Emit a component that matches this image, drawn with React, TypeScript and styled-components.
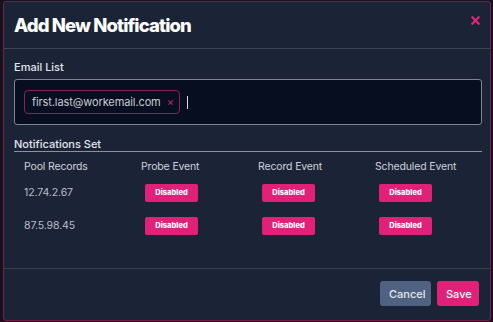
import React from "react";
import styled, { createGlobalStyle } from "styled-components";

const GlobalStyle = createGlobalStyle`
  html, body {
    margin: 0;
    padding: 0;
    background: #12141a;
  }
  body {
    font-family: Inter, "Noto Sans", sans-serif;
  }
`;

const rows = [
  { ip: "12.74.2.67" },
  { ip: "87.5.98.45" },
];

const columns = ["Pool Records", "Probe Event", "Record Event", "Scheduled Event"];

export default function App() {
  return (
    <>
      <GlobalStyle />
      <Backdrop>
        <Modal>
          <Header>
            <Title>Add New Notification</Title>
            <CloseButton aria-label="close">
              <svg width="9" height="9" viewBox="0 0 10 10">
                <path d="M1.5 1.5 L8.5 8.5 M8.5 1.5 L1.5 8.5" stroke="#e3237d" strokeWidth="2.4" strokeLinecap="square" />
              </svg>
            </CloseButton>
          </Header>
          <Body>
            <Label>Email List</Label>
            <EmailBox>
              <Chip>
                first.last@workemail.com
                <ChipRemove>×</ChipRemove>
              </Chip>
              <Caret />
            </EmailBox>
            <SectionTitle>Notifications Set</SectionTitle>
            <Table>
              {columns.map((c) => (
                <HeadCell key={c}>{c}</HeadCell>
              ))}
              {rows.map((r) => (
                <React.Fragment key={r.ip}>
                  <IpCell>{r.ip}</IpCell>
                  <Cell><StatusButton>Disabled</StatusButton></Cell>
                  <Cell><StatusButton>Disabled</StatusButton></Cell>
                  <Cell><StatusButton>Disabled</StatusButton></Cell>
                </React.Fragment>
              ))}
            </Table>
          </Body>
          <Footer>
            <Button $variant="secondary">Cancel</Button>
            <Button $variant="primary">Save</Button>
          </Footer>
        </Modal>
      </Backdrop>
    </>
  );
}

const Backdrop = styled.div`
  width: 493px;
  height: 322px;
  padding: 1px 2px 1px 3px;
  box-sizing: border-box;
`;

const Modal = styled.div`
  width: 488px;
  height: 320px;
  box-sizing: border-box;
  background: #1b2437;
  border: 1px solid #7c1d4f;
  border-radius: 3px;
  display: flex;
  flex-direction: column;
`;

const Header = styled.div`
  height: 47px;
  box-sizing: border-box;
  border-bottom: 1px solid #3d4452;
  display: flex;
  align-items: flex-start;
  justify-content: space-between;
  padding: 12px 9px 0 10px;
`;

const Title = styled.h1`
  margin: 0;
  font-family: Inter, sans-serif;
  font-size: 18.5px;
  font-weight: 800;
  color: #ffffff;
  letter-spacing: -0.9px;
`;

const CloseButton = styled.button`
  background: none;
  border: none;
  padding: 0;
  margin-top: 0;
  width: 12px;
  height: 12px;
  display: flex;
  align-items: center;
  justify-content: center;
`;

const Body = styled.div`
  flex: 1;
  padding: 11px 8px 0 10px;
  display: flex;
  flex-direction: column;
`;

const Label = styled.div`
  font-size: 11px;
  font-weight: 500;
  color: #e2e5ea;
  line-height: 14px;
`;

const EmailBox = styled.div`
  margin-top: 5px;
  height: 46px;
  box-sizing: border-box;
  background: #060e1f;
  border: 1px solid #80848f;
  border-radius: 3px;
  display: flex;
  align-items: center;
  padding: 0 9px;
  gap: 7px;
`;

const Chip = styled.div`
  height: 24px;
  box-sizing: border-box;
  border: 1px solid #8c1f55;
  border-radius: 4px;
  display: flex;
  align-items: center;
  padding: 0 5px 0 7px;
  gap: 6px;
  font-size: 11px;
  letter-spacing: -0.1px;
  color: #c9ccd3;
`;

const ChipRemove = styled.span`
  color: #c2236d;
  font-size: 11px;
`;

const Caret = styled.span`
  width: 1px;
  height: 13px;
  background: #d9dce2;
`;

const SectionTitle = styled.div`
  margin-top: 13px;
  font-size: 11px;
  font-weight: 500;
  color: #e2e5ea;
  line-height: 13px;
  padding-bottom: 0;
  border-bottom: 1.5px solid #8d919b;
`;

const Table = styled.div`
  display: grid;
  grid-template-columns: 117px 117px 117px 1fr;
  grid-auto-rows: 33px;
  grid-template-rows: 24px;
  padding-left: 10px;
`;

const HeadCell = styled.div`
  font-size: 10.5px;
  letter-spacing: -0.15px;
  color: #cfd2d8;
  display: flex;
  align-items: center;
  padding-top: 4px;
`;

const IpCell = styled.div`
  font-size: 10.5px;
  letter-spacing: -0.1px;
  color: #b9bdc5;
  display: flex;
  align-items: center;
`;

const Cell = styled.div`
  display: flex;
  align-items: center;
  padding-left: 4px;
`;

const StatusButton = styled.button`
  width: 53px;
  height: 18px;
  border: none;
  border-radius: 2px;
  background: #e1207a;
  color: #ffffff;
  font-family: Inter, sans-serif;
  font-size: 7.5px;
  font-weight: 800;
  padding: 0;
`;

const Footer = styled.div`
  height: 52px;
  box-sizing: border-box;
  border-top: 1px solid #34404c;
  display: flex;
  justify-content: flex-end;
  align-items: center;
  gap: 6px;
  padding: 0 11px 2px 0;
`;

const Button = styled.button<{ $variant: "primary" | "secondary" }>`
  height: 25px;
  border: none;
  border-radius: 3px;
  padding: 0 9px;
  font-family: Inter, sans-serif;
  font-size: 11px;
  font-weight: 500;
  color: ${(p) => (p.$variant === "primary" ? "#ffffff" : "#e3e6eb")};
  background: ${(p) => (p.$variant === "primary" ? "#e1207a" : "#4f6281")};
  width: ${(p) => (p.$variant === "primary" ? "42px" : "51px")};
`;
